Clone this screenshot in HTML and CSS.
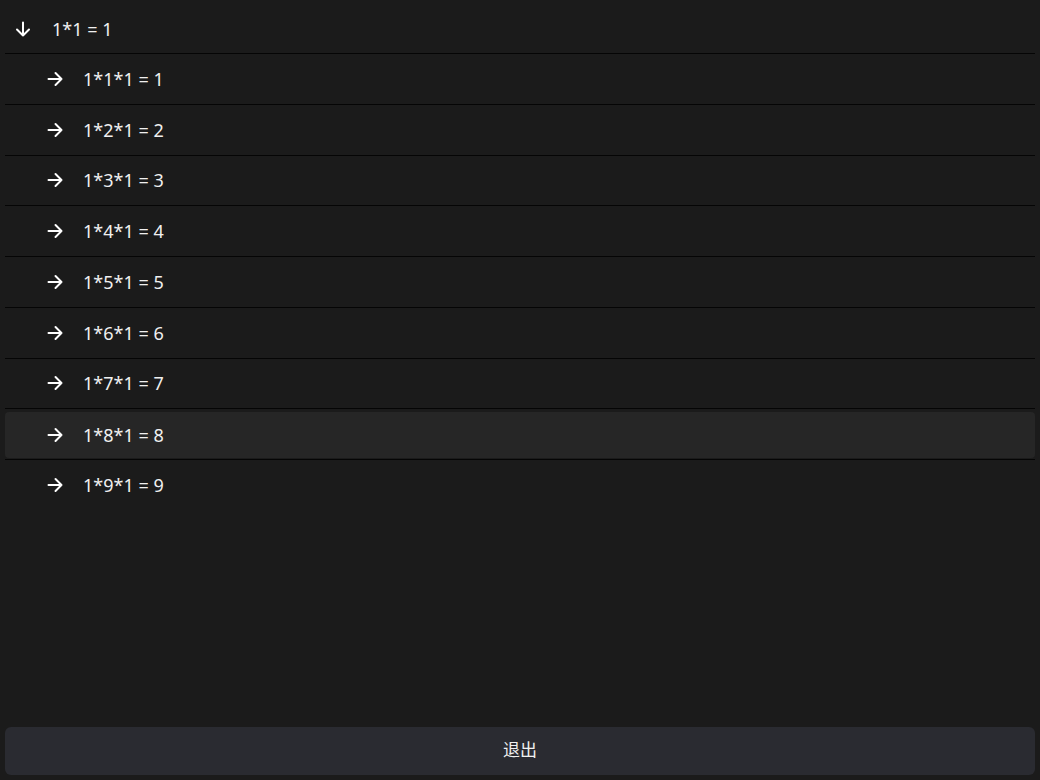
FILE: index.html
```html
<!DOCTYPE html>
<html lang="zh">
<head>
<meta charset="utf-8">
<link rel="stylesheet" href="styles.css">
</head>
<body>
<div class="app">
  <div class="tree">
    <div class="row header">
      <svg class="icon" viewBox="0 0 16 16"><path d="M8 1.5V14.5M2 8.5L8 14.5L14 8.5"/></svg>
      <span class="label">1*1 = 1</span>
    </div>
    <div class="row child"><div class="inner"><svg class="icon" viewBox="0 0 16 16"><path d="M1.5 8H14.5M8.5 2L14.5 8L8.5 14"/></svg><span class="label">1*1*1 = 1</span></div></div>
    <div class="row child"><div class="inner"><svg class="icon" viewBox="0 0 16 16"><path d="M1.5 8H14.5M8.5 2L14.5 8L8.5 14"/></svg><span class="label">1*2*1 = 2</span></div></div>
    <div class="row child"><div class="inner"><svg class="icon" viewBox="0 0 16 16"><path d="M1.5 8H14.5M8.5 2L14.5 8L8.5 14"/></svg><span class="label">1*3*1 = 3</span></div></div>
    <div class="row child"><div class="inner"><svg class="icon" viewBox="0 0 16 16"><path d="M1.5 8H14.5M8.5 2L14.5 8L8.5 14"/></svg><span class="label">1*4*1 = 4</span></div></div>
    <div class="row child"><div class="inner"><svg class="icon" viewBox="0 0 16 16"><path d="M1.5 8H14.5M8.5 2L14.5 8L8.5 14"/></svg><span class="label">1*5*1 = 5</span></div></div>
    <div class="row child"><div class="inner"><svg class="icon" viewBox="0 0 16 16"><path d="M1.5 8H14.5M8.5 2L14.5 8L8.5 14"/></svg><span class="label">1*6*1 = 6</span></div></div>
    <div class="row child"><div class="inner"><svg class="icon" viewBox="0 0 16 16"><path d="M1.5 8H14.5M8.5 2L14.5 8L8.5 14"/></svg><span class="label">1*7*1 = 7</span></div></div>
    <div class="row child hover"><div class="inner"><svg class="icon" viewBox="0 0 16 16"><path d="M1.5 8H14.5M8.5 2L14.5 8L8.5 14"/></svg><span class="label">1*8*1 = 8</span></div></div>
    <div class="row child last"><div class="inner"><svg class="icon" viewBox="0 0 16 16"><path d="M1.5 8H14.5M8.5 2L14.5 8L8.5 14"/></svg><span class="label">1*9*1 = 9</span></div></div>
  </div>
  <button class="quit"><span>退出</span></button>
</div>
</body>
</html>
```
FILE: styles.css
```css
html, body {
  margin: 0;
  padding: 0;
  background: #1b1b1b;
}
body {
  font-family: "Noto Sans", "Noto Sans CJK SC", sans-serif;
  color: #f0f0f0;
}
.app {
  box-sizing: border-box;
  width: 1040px;
  height: 780px;
  padding: 5px;
  display: flex;
  flex-direction: column;
}
.tree {
  flex: 1;
  display: flex;
  flex-direction: column;
}
.row {
  box-sizing: border-box;
  display: flex;
  align-items: center;
  border-bottom: 1px solid #050505;
  font-size: 18px;
}
.row.last {
  border-bottom: none;
}
.header {
  height: 49px;
  padding-left: 10px;
}
.header .label {
  margin-left: 21px;
}
.child {
  height: 50.75px;
  align-items: stretch;
}
.child .inner {
  flex: 1;
  display: flex;
  align-items: center;
  padding-left: 42px;
  border-radius: 4px;
}
.child .label {
  margin-left: 20px;
}
.hover .inner {
  margin: 3px 0 1px;
  background: #262626;
}
.icon {
  width: 16px;
  height: 16px;
  flex: none;
  fill: none;
  stroke: #ffffff;
  stroke-width: 2;
  stroke-linecap: round;
  stroke-linejoin: round;
}
.quit {
  height: 48px;
  border: none;
  border-radius: 6px;
  background: #2a2b31;
  color: #f0f0f0;
  font-family: "Noto Sans CJK SC", "Noto Sans", sans-serif;
  font-size: 17px;
  padding: 0;
  display: flex;
  align-items: center;
  justify-content: center;
}
.quit span {
  line-height: 1;
  display: block;
  margin-top: -6px;
}
```
